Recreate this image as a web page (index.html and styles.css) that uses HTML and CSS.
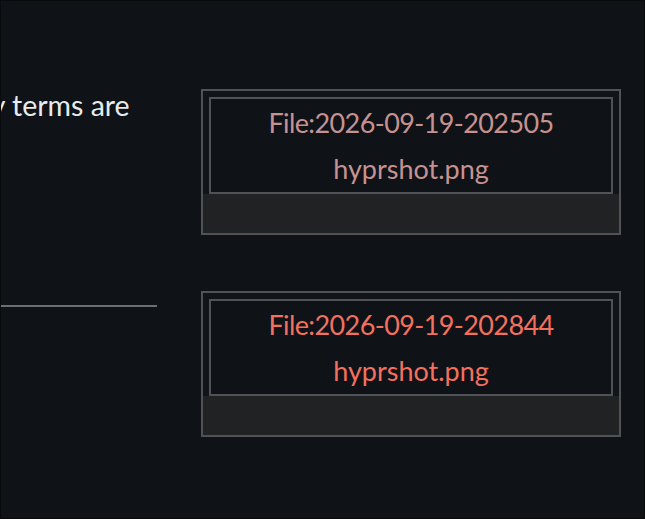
FILE: index.html
```html
<!DOCTYPE html>
<html>
<head>
<meta charset="utf-8">
<link rel="stylesheet" href="styles.css">
</head>
<body>
<div class="page">
  <div class="left">
    <p class="para">any terms are</p>
    <hr class="rule">
  </div>
  <div class="right">
    <div class="thumb">
      <div class="file">
        <a class="link visited"><span class="fname">File:2026-09-19-202505</span><br>hyprshot.png</a>
      </div>
      <div class="caption"></div>
    </div>
    <div class="thumb">
      <div class="file">
        <a class="link new"><span class="fname">File:2026-09-19-202844</span><br>hyprshot.png</a>
      </div>
      <div class="caption"></div>
    </div>
  </div>
</div>
</body>
</html>
```
FILE: styles.css
```css
html, body {
  margin: 0;
  padding: 0;
  height: 100%;
}
body {
  background: #0f1317;
  font-family: Lato, "Noto Sans", sans-serif;
  overflow: hidden;
}
.page {
  box-sizing: border-box;
  height: 519px;
  width: 645px;
  border: 1px solid #080a0c;
  display: flex;
  gap: 44px;
  padding-top: 88px;
}
.left {
  width: 156px;
  overflow: hidden;
  flex: none;
}
.para {
  margin: 0;
  color: #e8eaed;
  font-size: 28.5px;
  line-height: 32px;
  white-space: nowrap;
  text-indent: -40px;
}
.rule {
  margin: 184px 0 0;
  border: 0;
  height: 2px;
  background: #6c6f72;
}
.right {
  display: flex;
  flex-direction: column;
  gap: 56px;
}
.thumb {
  width: 420px;
  box-sizing: border-box;
  border: 2px solid #4f5357;
  padding: 6px 6px 0;
  background: #111418;
}
.file {
  height: 97px;
  box-sizing: border-box;
  border: 2px solid #4f5357;
  background: #0f1216;
  display: flex;
  align-items: center;
  justify-content: center;
  text-align: center;
}
.link {
  font-size: 27px;
  line-height: 46px;
}
.fname {
  letter-spacing: -0.6px;
}
.visited { color: #c69291; }
.new { color: #f3705f; }
.caption {
  height: 39px;
  margin: 0 -6px;
  background: #212223;
}
```
